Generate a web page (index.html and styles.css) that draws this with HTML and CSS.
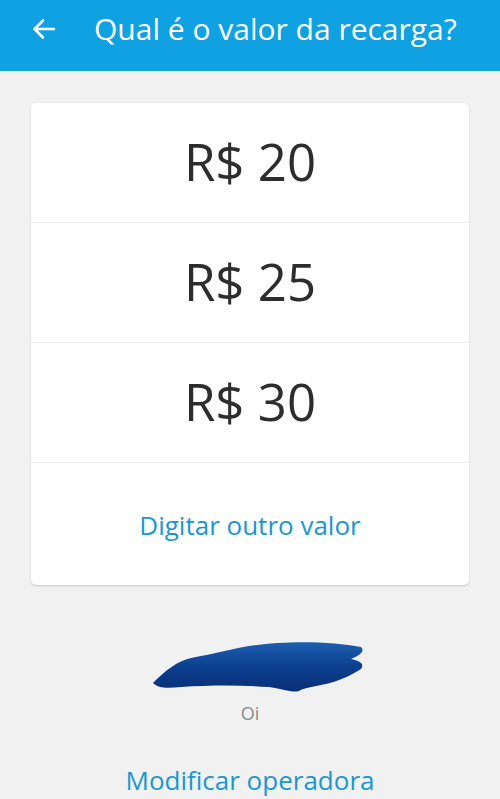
FILE: index.html
```html
<!DOCTYPE html>
<html lang="pt-BR">
<head>
  <meta charset="UTF-8">
  <meta name="viewport" content="width=device-width, initial-scale=1.0">
  <title>Recarga</title>
  <link rel="stylesheet" href="styles.css">
</head>
<body>
  <div class="topbar">
    <a class="back" href="#">
      <svg width="24" height="22" viewBox="0 0 24 22"><path d="M22 11H3M11 2.5L2.5 11l8.5 8.5" fill="none" stroke="#fff" stroke-width="2.6" stroke-linecap="round" stroke-linejoin="round"/></svg>
    </a>
    <h1>Qual é o valor da recarga?</h1>
  </div>

  <div class="content">
    <div class="card">
      <div class="option price">R$ 20</div>
      <div class="option price">R$ 25</div>
      <div class="option price">R$ 30</div>
      <div class="option other">Digitar outro valor</div>
    </div>

    <div class="operator">
      <svg class="scribble" width="216" height="56" viewBox="0 0 216 56">
        <defs>
          <linearGradient id="ink" x1="0" y1="0" x2="0" y2="1">
            <stop offset="0" stop-color="#1d5fb0"/>
            <stop offset="0.5" stop-color="#0b3f8f"/>
            <stop offset="1" stop-color="#0a2f78"/>
          </linearGradient>
        </defs>
        <path d="M2 44 C14 32 26 22 40 19 C70 14 92 6 126 4 C160 2 188 4 210 8 C214 12 210 16 200 20 C208 22 214 24 210 30 C200 36 190 42 170 46 C160 48 150 50 148 52 C140 54 134 50 118 48 C90 46 60 46 30 48 C18 49 8 50 2 44 Z" fill="url(#ink)"/>
      </svg>
      <div class="operator-name">Oi</div>
      <a class="change" href="#">Modificar operadora</a>
    </div>
  </div>
</body>
</html>
```

FILE: styles.css
```css
body {
  margin: 0;
  background-color: #f1f1f1;
  font-family: "Open Sans", "Lato", sans-serif;
  overflow: hidden;
}

.topbar {
  height: 71px;
  background-color: #0fa1e1;
  display: flex;
  align-items: center;
  padding-bottom: 14px;
  box-sizing: border-box;
}

.back {
  display: flex;
  margin-left: 32px;
  width: 24px;
}

.topbar h1 {
  margin: 0 0 0 38px;
  color: #fff;
  font-size: 30px;
  font-weight: normal;
}

.content {
  padding: 32px 31px 0 31px;
}

.card {
  background-color: #fff;
  border-radius: 5px;
  box-shadow: 0 1px 2px rgba(0, 0, 0, 0.18);
}

.option {
  height: 120px;
  box-sizing: border-box;
  display: flex;
  justify-content: center;
  align-items: center;
  border-bottom: 1px solid #ececec;
}

.option:last-child {
  height: 122px;
  border-bottom: none;
}

.price {
  font-size: 51px;
  color: #2d2d2d;
  padding-bottom: 4px;
}

.other {
  font-size: 26px;
  color: #1b97d0;
  padding-top: 2px;
}

.operator {
  display: flex;
  flex-direction: column;
  align-items: center;
  padding-top: 54px;
}

.scribble {
  margin-left: 18px;
}

.operator-name {
  margin-top: 6px;
  font-size: 18px;
  color: #8a8a8a;
}

.change {
  margin-top: 37px;
  font-size: 26px;
  color: #1b97d0;
  text-decoration: none;
}
```
